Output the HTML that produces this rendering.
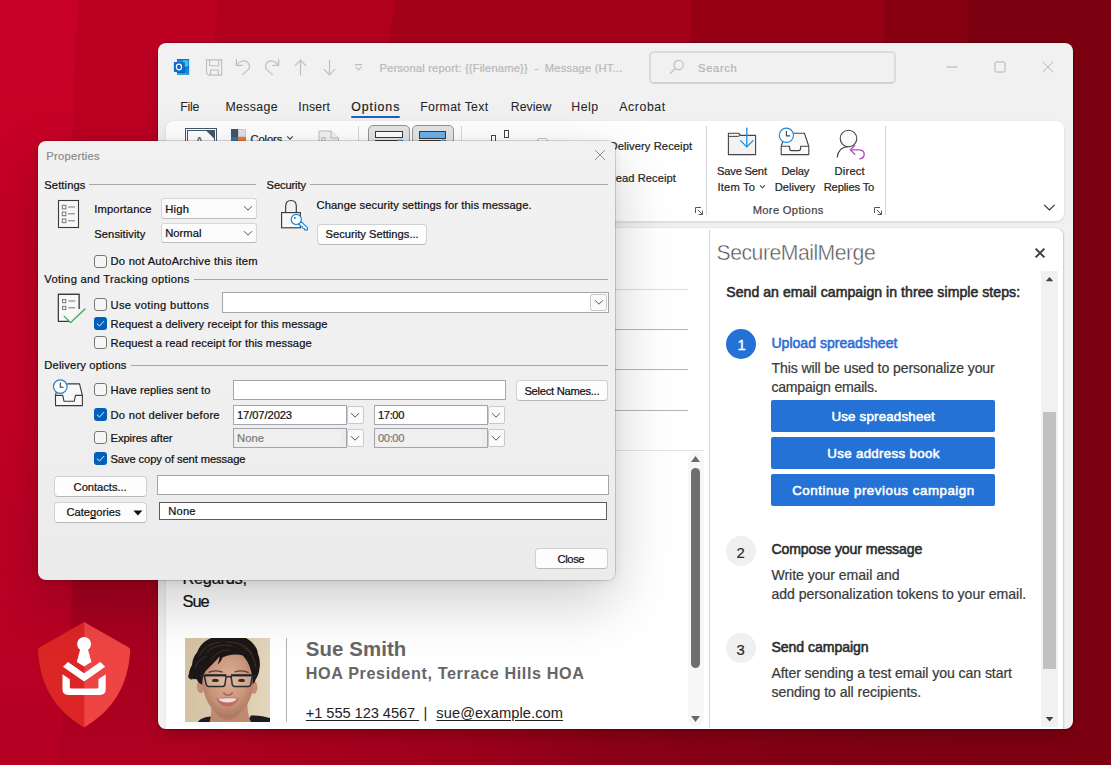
<!DOCTYPE html>
<html lang="en"><head><meta charset="utf-8"><title>Outlook – SecureMailMerge</title>
<style>
html,body{margin:0;padding:0}
body{width:1111px;height:765px;overflow:hidden;position:relative;background:#a8001e;font-family:"Liberation Sans",sans-serif}
body div,body svg,body span.t{position:absolute;box-sizing:border-box}
span.t{white-space:pre;line-height:1;transform-origin:0 50%}
svg{overflow:visible}
span.t{-webkit-text-stroke:0.22px currentColor}
div.g{left:0;top:0;width:0;height:0}

</style></head>
<body>
<div class="g desktop-wallpaper">
<svg style="left:0px;top:0px;" width="1111" height="765" viewBox="0 0 1111 765">
<defs>
<linearGradient id="bg" x1="0" y1="0" x2="1111" y2="0" gradientUnits="userSpaceOnUse">
<stop offset="0" stop-color="#c40026"/><stop offset="0.05" stop-color="#bc0024"/><stop offset="0.185" stop-color="#ae0020"/><stop offset="0.42" stop-color="#9c001b"/><stop offset="0.55" stop-color="#8a0016"/><stop offset="0.77" stop-color="#7e0013"/><stop offset="1" stop-color="#7a0011"/>
</linearGradient>
<linearGradient id="lf" x1="0" y1="0" x2="0" y2="765" gradientUnits="userSpaceOnUse"><stop offset="0" stop-color="#c80027"/><stop offset="0.55" stop-color="#c40026"/><stop offset="0.8" stop-color="#b90024"/><stop offset="1" stop-color="#b50023"/></linearGradient>
<linearGradient id="lf2" x1="0" y1="560" x2="0" y2="765" gradientUnits="userSpaceOnUse"><stop offset="0" stop-color="#a5001f"/><stop offset="0.5" stop-color="#a8001f"/><stop offset="1" stop-color="#b00021"/></linearGradient>
<linearGradient id="fade" x1="0" y1="0" x2="0" y2="1"><stop offset="0" stop-color="#fff" stop-opacity="1"/><stop offset="1" stop-color="#fff" stop-opacity="0"/></linearGradient>
</defs>
<rect width="1111" height="765" fill="url(#bg)"/>
<!-- low-poly facets (top band) -->
<polygon points="0,0 78,0 70,200 73,560 70,640 58,765 0,765" fill="url(#lf)"/>
<polygon points="78,0 218,0 206,150 157,160 157,141 70,200" fill="#bc0022"/>
<polygon points="218,0 396,0 386,60 206,150" fill="#b1001e"/>
<polygon points="396,0 691,0 691,60 386,60" fill="#a30019"/>
<polygon points="691,0 884,0 884,60 691,60" fill="#950015"/>
<polygon points="884,0 968,0 968,60 884,60" fill="#870012"/>
<polygon points="968,0 1111,0 1111,765 1060,765 1060,60 968,60" fill="#7b0010"/>
<polygon points="73,560 160,560 160,720 207,720 203,765 58,765 70,640" fill="url(#lf2)"/>
</svg>
</div>
<div class="g brand-logo">
<svg style="left:30px;top:615px;" width="110" height="120" viewBox="0 0 110 120">
<path d="M54.1 7 L98.4 32.2 Q100.3 33.2 100.2 35.6 C98.4 70 83.6 95 54.1 112.6 Z" fill="#ef4444"/>
<path d="M54.1 7 L9.8 32.2 Q7.9 33.2 8 35.6 C9.8 70 24.6 95 54.1 112.6 Z" fill="#dc2626"/>
<g fill="#fff">
<circle cx="54.1" cy="29" r="7"/>
<path d="M50.6 33 L57.6 33 L61.4 47 L54.1 51.5 L46.8 47 Z"/>
<path d="M33 51.8 L38 46.9 L54.1 58.3 L70.2 46.9 L75.2 51.8 L54.1 66.5 Z"/>
<path d="M32.5 59.2 L39.8 64.3 L39.8 72 Q39.8 73.5 41.3 73.5 L66.9 73.5 Q68.4 73.5 68.4 72 L68.4 64.3 L75.7 59.2 L75.7 74 Q75.7 79.9 69.8 79.9 L38.4 79.9 Q32.5 79.9 32.5 74 Z"/>
</g>
</svg>
</div>
<div class="g outlook-window">
<div style="left:157.5px;top:42.5px;width:915px;height:686px;background:#f1f1f1;border-radius:8px;box-shadow:0 0 0 1px rgba(60,0,10,.30),0 6px 16px -5px rgba(30,0,6,.40);"></div>
<div style="left:166px;top:121px;width:898px;height:99.5px;background:#fff;border-radius:8px;box-shadow:0 1px 3px rgba(0,0,0,.12);"></div>
<div style="left:166px;top:228px;width:898px;height:500.5px;background:#fff;border-radius:8px 8px 0 0;box-shadow:0 0 2px rgba(0,0,0,.12);border-right:1px solid #d2d2d2;"></div>
<div class="g title-bar">
<svg style="left:173px;top:58px;" width="18" height="18" viewBox="0 0 18 18">
<path d="M4 1 H15.4 Q16.1 1 16.1 1.7 V16.3 Q16.1 17 15.4 17 H4.7 Q4 17 4 16.3 Z" fill="#1490df"/>
<path d="M4 1 H15.4 Q16.1 1 16.1 1.7 V2.2 H4 Z" fill="#0a6cc8"/>
<path d="M10 2.2 H15.2 V8.8 H10 Z" fill="#3fc0f4"/>
<path d="M11.2 8.8 H16.1 V16.3 Q16.1 17 15.4 17 H11.2 Z" fill="#1b86dc"/>
<path d="M12.2 10.9 L16.1 8.4" stroke="#0d5aa8" stroke-width="0.7" fill="none"/>
<path d="M4 14.6 H12 L16.1 17 H4.7 Q4 17 4 16.3 Z" fill="#28a8ea"/>
<path d="M11 4.6 H11.8 V15 H3.8 V14 H11 Z" fill="#0b4f8f" opacity=".75"/>
<rect x="0.9" y="4" width="10.1" height="10" rx="0.8" fill="#0f6ad0"/>
<ellipse cx="5.95" cy="9" rx="2.6" ry="2.85" fill="none" stroke="#fff" stroke-width="1.2"/>
</svg>
<svg style="left:206px;top:58.5px;" width="17" height="17" viewBox="0 0 17 17"><g fill="none" stroke="#bebebe" stroke-width="1.1">
<path d="M0.5 0.9 H15.7 V16.1 H2.6 L0.5 14 Z"/>
<path d="M3.6 0.9 V6.8 H12.8 V0.9"/><path d="M4.6 16.1 V11 H12.3 V16.1"/></g></svg>
<svg style="left:235px;top:58px;" width="16" height="18" viewBox="0 0 16 18"><g fill="none" stroke="#bebebe" stroke-width="1.2" stroke-linecap="round" stroke-linejoin="round">
<path d="M1.4 1.6 V7.4 H7.2"/><path d="M1.6 7.2 C4 3.2 9 1.6 12.4 4.2 C15.6 6.8 14.8 10.4 12.4 12.4 L7.6 16.6"/></g></svg>
<svg style="left:264px;top:58px;" width="16" height="18" viewBox="0 0 16 18"><g fill="none" stroke="#bebebe" stroke-width="1.2" stroke-linecap="round" stroke-linejoin="round" transform="translate(16,0) scale(-1,1)">
<path d="M1.4 1.6 V7.4 H7.2"/><path d="M1.6 7.2 C4 3.2 9 1.6 12.4 4.2 C15.6 6.8 14.8 10.4 12.4 12.4 L7.6 16.6"/></g></svg>
<svg style="left:294px;top:58.5px;" width="13" height="17" viewBox="0 0 13 17"><g fill="none" stroke="#bebebe" stroke-width="1.2" stroke-linecap="round" stroke-linejoin="round"><path d="M6.5 16 V1.2"/><path d="M1.2 6.6 L6.5 1.2 L11.8 6.6"/></g></svg>
<svg style="left:323px;top:58.5px;" width="13" height="17" viewBox="0 0 13 17"><g fill="none" stroke="#bebebe" stroke-width="1.2" stroke-linecap="round" stroke-linejoin="round"><path d="M6.5 1 V15.8"/><path d="M1.2 10.4 L6.5 15.8 L11.8 10.4"/></g></svg>
<svg style="left:354px;top:62.5px;" width="9" height="9" viewBox="0 0 9 9"><g fill="none" stroke="#bebebe" stroke-width="1.1" stroke-linecap="round" stroke-linejoin="round"><path d="M1.2 1.6 H7.8"/><path d="M1.9 4.2 L4.5 6.8 L7.1 4.2"/></g></svg>
<span class="t" style="left:379.40px;top:63.00px;font-size:11.2px;color:#b9b9b9;letter-spacing:0.165px;">Personal report: {{Filename}}  -  Message (HT...</span>
<div style="left:649px;top:51px;width:246.5px;height:32.5px;background:#f1f1f1;border:2px solid #dcdcdc;border-bottom-color:#d2d2d2;border-radius:5px;"></div>
<svg style="left:669px;top:59px;" width="16" height="16" viewBox="0 0 16 16"><g fill="none" stroke="#bdbdbd" stroke-width="1.2" stroke-linecap="round"><circle cx="9.6" cy="6" r="4.6"/><path d="M6.3 9.4 L1.4 14.4"/></g></svg>
<span class="t" style="left:698.00px;top:63.00px;font-size:11.2px;color:#b5b5b5;letter-spacing:0.669px;">Search</span>
<svg style="left:946px;top:60px;" width="110" height="14" viewBox="0 0 110 14"><g fill="none" stroke="#b4b4b4" stroke-width="1">
<path d="M0.5 7 H11.5"/><rect x="49" y="2" width="10" height="10" rx="1.2"/><path d="M96.5 1.8 L107 12.2 M107 1.8 L96.5 12.2"/></g></svg>
</div>
<div class="g ribbon-tabs">
<span class="t" style="left:180.30px;top:101.00px;font-size:12.3px;color:#262626;letter-spacing:-0.276px;-webkit-text-stroke:0.06px currentColor;">File</span>
<span class="t" style="left:225.40px;top:101.00px;font-size:12.3px;color:#262626;letter-spacing:0.382px;-webkit-text-stroke:0.06px currentColor;">Message</span>
<span class="t" style="left:298.30px;top:101.00px;font-size:12.3px;color:#262626;letter-spacing:0.167px;-webkit-text-stroke:0.06px currentColor;">Insert</span>
<span class="t" style="left:351.30px;top:101.00px;font-size:12.3px;color:#1c1c1c;letter-spacing:0.935px;-webkit-text-stroke:0.2px currentColor;">Options</span>
<div style="left:351px;top:116px;width:48.5px;height:2px;background:#1763c2;border-radius:1px;"></div>
<span class="t" style="left:420.20px;top:101.00px;font-size:12.3px;color:#262626;letter-spacing:0.330px;-webkit-text-stroke:0.06px currentColor;">Format Text</span>
<span class="t" style="left:510.80px;top:101.00px;font-size:12.3px;color:#262626;letter-spacing:0.034px;-webkit-text-stroke:0.06px currentColor;">Review</span>
<span class="t" style="left:571.20px;top:101.00px;font-size:12.3px;color:#262626;letter-spacing:0.568px;-webkit-text-stroke:0.06px currentColor;">Help</span>
<span class="t" style="left:619.20px;top:101.00px;font-size:12.3px;color:#262626;letter-spacing:0.602px;-webkit-text-stroke:0.06px currentColor;">Acrobat</span>
</div>
<div class="g ribbon-commands">
<div style="left:185.3px;top:128px;width:31.5px;height:20px;border:1px solid #44546a;background:#fff;"></div>
<div style="left:187.3px;top:130px;width:27.5px;height:18px;border:1px solid #44546a;background:#fff;"></div>
<svg style="left:206px;top:130px;" width="9" height="9" viewBox="0 0 9 9"><path d="M0 0.5 H8.5 V9 Z" fill="#44546a"/></svg>
<span class="t" style="left:195.00px;top:135.00px;font-size:13px;color:#44546a;">A</span>
<div style="left:230.6px;top:129.4px;width:7.6px;height:8px;background:#44546a;"></div>
<div style="left:238.2px;top:129.4px;width:7.6px;height:8px;background:#e3e3e3;border:0.5px solid #cfcfcf;"></div>
<div style="left:230.6px;top:137.4px;width:7.6px;height:8px;background:#2e75b6;"></div>
<div style="left:238.2px;top:137.4px;width:7.6px;height:8px;background:#ed7d31;"></div>
<span class="t" style="left:250.50px;top:134.00px;font-size:11.2px;color:#262626;letter-spacing:-0.106px;">Colors</span>
<svg style="left:286.3px;top:135.2px;" width="8" height="6" viewBox="0 0 8 6"><path d="M1.2 1.4 L4 4.2 L6.8 1.4" fill="none" stroke="#444" stroke-width="1.1"/></svg>
<svg style="left:318px;top:129.5px;" width="22" height="16" viewBox="0 0 22 16"><g fill="#f3f3f3" stroke="#bdbdbd" stroke-width="1"><path d="M1 15 V1 H13 L20.5 8 V15"/><path d="M13 1 V8 H20.5"/><path d="M4 15 V7.5 H7 V15" fill="none"/></g></svg>
<div style="left:358px;top:126px;width:1px;height:90px;background:#d9d9d9;"></div>
<div style="left:368px;top:125.3px;width:41.5px;height:24px;background:#e6e6e6;border:1px solid #959595;border-radius:5px;"></div>
<div style="left:412px;top:125.3px;width:41.5px;height:24px;background:#e6e6e6;border:1px solid #959595;border-radius:5px;"></div>
<div style="left:375.2px;top:131.3px;width:27.6px;height:7px;background:#fff;border:1.2px solid #3b3b3b;"></div>
<div style="left:375.2px;top:139.6px;width:27.6px;height:7px;background:#fff;border:1.2px solid #3b3b3b;"></div>
<div style="left:419px;top:131.3px;width:27.3px;height:7.5px;background:#6cb2ee;border:1.2px solid #3b3b3b;"></div>
<div style="left:419px;top:140px;width:27.3px;height:7px;background:#fff;border:1.2px solid #3b3b3b;"></div>
<div style="left:461px;top:126px;width:1px;height:90px;background:#d9d9d9;"></div>
<svg style="left:394px;top:137px;" width="12" height="8" viewBox="0 0 12 8"><circle cx="6" cy="7" r="4" fill="#fff" stroke="#1e8bd8" stroke-width="1.1"/></svg>
<svg style="left:437px;top:137px;" width="12" height="8" viewBox="0 0 12 8"><circle cx="6" cy="7" r="4" fill="#fff" stroke="#1e8bd8" stroke-width="1.1"/></svg>
<div style="left:490.5px;top:134.5px;width:5.5px;height:9px;border:1px solid #444;"></div>
<div style="left:503.5px;top:130px;width:5.5px;height:8px;border:1px solid #444;"></div>
<div style="left:537px;top:138.3px;width:10.5px;height:8px;border:1px solid #c4c4c4;border-radius:2px;"></div>
<span class="t" style="left:609.50px;top:141.00px;font-size:11.2px;color:#262626;letter-spacing:0.076px;">Delivery Receipt</span>
<span class="t" style="left:607.60px;top:173.00px;font-size:11.2px;color:#262626;letter-spacing:0.037px;">Read Receipt</span>
<svg style="left:695px;top:207px;" width="8" height="8" viewBox="0 0 8 8"><g fill="none" stroke="#555" stroke-width="1"><path d="M0.5 6 V0.5 H6"/><path d="M2.8 2.8 L7.5 7.5 M7.5 3.6 V7.5 H3.6"/></g></svg>
<div style="left:706.2px;top:126.3px;width:1px;height:88.5px;background:#d4d4d4;"></div>
<svg style="left:726px;top:126px;" width="32" height="30" viewBox="0 0 32 30"><path d="M2.4 28.6 V7.2 H12.6 L14.6 9.4 H29.6 V28.6 Z" fill="#f2f2f2" stroke="#444" stroke-width="1.1" stroke-linejoin="round"/>
<path d="M2.4 10.4 H12 L14.2 9.4" fill="none" stroke="#444" stroke-width="1"/>
<g fill="none" stroke="#1e8bd8" stroke-width="1.3" stroke-linecap="round" stroke-linejoin="round"><path d="M20.8 2.2 V20.8"/><path d="M14.6 14.6 L20.8 20.9 L27 14.6"/></g></svg>
<span class="t" style="left:717.10px;top:166.00px;font-size:11.2px;color:#262626;letter-spacing:-0.216px;">Save Sent</span>
<span class="t" style="left:717.50px;top:182.00px;font-size:11.2px;color:#262626;letter-spacing:0.153px;">Item To</span>
<svg style="left:758.6px;top:184px;" width="7" height="6" viewBox="0 0 7 6"><path d="M1 1.4 L3.4 3.8 L5.8 1.4" fill="none" stroke="#444" stroke-width="1.1"/></svg>
<svg style="left:777px;top:126px;" width="34" height="30" viewBox="0 0 34 30"><path d="M12 7.2 H27.4 L31.8 20.2 V28.6 H4.2 V20.2 L6.5 13" fill="#fafafa" stroke="#444" stroke-width="1.1" stroke-linejoin="round"/>
<path d="M4.2 20.2 H12.6 V22.6 Q12.6 24.6 14.6 24.6 H21.6 Q23.6 24.6 23.6 22.6 V20.2 H31.8" fill="none" stroke="#444" stroke-width="1.1" stroke-linejoin="round"/>
<circle cx="9.4" cy="9.3" r="7.1" fill="#fff" stroke="#1e8bd8" stroke-width="1.2"/>
<path d="M9.4 5 V9.9 H13" fill="none" stroke="#444" stroke-width="1.1"/></svg>
<span class="t" style="left:781.40px;top:166.00px;font-size:11.2px;color:#262626;letter-spacing:-0.152px;">Delay</span>
<span class="t" style="left:774.70px;top:182.00px;font-size:11.2px;color:#262626;letter-spacing:0.011px;">Delivery</span>
<svg style="left:832px;top:126px;" width="36" height="34" viewBox="0 0 36 34"><circle cx="16.5" cy="12.5" r="8.3" fill="#fafafa" stroke="#444" stroke-width="1.1"/>
<path d="M5.2 31.3 C6 24.5 10 21 16 20.6" fill="none" stroke="#444" stroke-width="1.1" stroke-linecap="round"/>
<g fill="none" stroke="#b44ac4" stroke-width="1.3" stroke-linecap="round" stroke-linejoin="round"><path d="M18.6 23.8 H27.4 Q32.2 24.2 32.2 28.4 Q32 32.2 27.8 32.8"/><path d="M22.8 19.4 L18.4 23.8 L22.8 28.2"/></g></svg>
<span class="t" style="left:834.60px;top:166.00px;font-size:11.2px;color:#262626;letter-spacing:0.176px;">Direct</span>
<span class="t" style="left:823.70px;top:182.00px;font-size:11.2px;color:#262626;letter-spacing:-0.159px;">Replies To</span>
<span class="t" style="left:752.70px;top:205.00px;font-size:11.2px;color:#444;letter-spacing:0.313px;">More Options</span>
<svg style="left:874px;top:207px;" width="8" height="8" viewBox="0 0 8 8"><g fill="none" stroke="#555" stroke-width="1"><path d="M0.5 6 V0.5 H6"/><path d="M2.8 2.8 L7.5 7.5 M7.5 3.6 V7.5 H3.6"/></g></svg>
<div style="left:885px;top:126.3px;width:1px;height:88.5px;background:#d4d4d4;"></div>
<svg style="left:1043px;top:203px;" width="13" height="9" viewBox="0 0 13 9"><path d="M1.2 1.8 L6.4 7 L11.6 1.8" fill="none" stroke="#333" stroke-width="1.2"/></svg>
</div>
<div class="g message-body">
<div style="left:600px;top:289px;width:88px;height:1px;background:#dcdcdc;"></div>
<div style="left:600px;top:329px;width:88px;height:1px;background:#b4b4b4;"></div>
<div style="left:600px;top:369px;width:88px;height:1px;background:#b4b4b4;"></div>
<div style="left:600px;top:409.5px;width:88px;height:1px;background:#b4b4b4;"></div>
<div style="left:600px;top:449.5px;width:104px;height:1px;background:#e1e1e1;"></div>
<div style="left:687.5px;top:452px;width:16px;height:274px;background:#f7f7f7;border-radius:8px;"></div>
<div style="left:691px;top:467.5px;width:9.2px;height:200px;background:#6f6f6f;border-radius:4.6px;"></div>
<svg style="left:690px;top:455px;" width="11" height="8" viewBox="0 0 11 8"><path d="M5.5 1 L10 7 H1 Z" fill="#6a6a6a"/></svg>
<svg style="left:690px;top:715px;" width="11" height="8" viewBox="0 0 11 8"><path d="M5.5 7 L10 1 H1 Z" fill="#6a6a6a"/></svg>
<span class="t" style="left:182.40px;top:570.00px;font-size:16.4px;color:#111;letter-spacing:-0.274px;">Regards,</span>
<span class="t" style="left:182.40px;top:593.00px;font-size:16.4px;color:#111;letter-spacing:-0.936px;">Sue</span>
<div style="left:286px;top:637.5px;width:1px;height:84.5px;background:#b5b5b5;"></div>
<span class="t" style="left:305.80px;top:639.00px;font-size:20.4px;color:#666;font-weight:700;letter-spacing:0.100px;-webkit-text-stroke:0;">Sue Smith</span>
<span class="t" style="left:305.80px;top:665.00px;font-size:16.2px;color:#666;font-weight:700;letter-spacing:0.617px;-webkit-text-stroke:0;">HOA President, Terrace Hills HOA</span>
<span class="t" style="left:305.80px;top:706.00px;font-size:14.67px;color:#222;letter-spacing:-0.074px;-webkit-text-stroke:0;text-decoration:underline;text-decoration-thickness:1px;text-underline-offset:2px;">+1 555 123 4567&nbsp;</span>
<span class="t" style="left:423.60px;top:706.00px;font-size:14.67px;color:#222;-webkit-text-stroke:0;">|</span>
<span class="t" style="left:436.30px;top:706.00px;font-size:14.67px;color:#222;letter-spacing:0.073px;-webkit-text-stroke:0;text-decoration:underline;text-decoration-thickness:1px;text-underline-offset:2px;">sue@example.com</span>
<svg style="left:185px;top:638px;" width="85" height="84" viewBox="0 0 85 84">
<defs><clipPath id="pc"><rect width="85" height="84"/></clipPath>
<filter id="pb" x="-10%" y="-10%" width="120%" height="120%"><feGaussianBlur stdDeviation="0.7"/></filter>
<filter id="pb2" x="-10%" y="-10%" width="120%" height="120%"><feGaussianBlur stdDeviation="1.6"/></filter>
<radialGradient id="skin" cx="0.5" cy="0.42" r="0.62"><stop offset="0" stop-color="#dcae96"/><stop offset="0.6" stop-color="#c9967c"/><stop offset="1" stop-color="#a5725b"/></radialGradient>
<linearGradient id="wall" x1="0" x2="1"><stop offset="0" stop-color="#d4c2a2"/><stop offset="0.7" stop-color="#ddceb2"/><stop offset="1" stop-color="#e3d6bd"/></linearGradient></defs>
<g clip-path="url(#pc)">
<rect width="85" height="84" fill="url(#wall)"/>
<g filter="url(#pb)">
<path d="M13 84 C15 80.5 20 79 26 78.5 L28 84 Z" fill="#1d1d20"/>
<path d="M62 84 L66 77.5 C73 77 80 78.5 85 80 V84 Z" fill="#1d1d20"/>
<path d="M25.5 62 C27 72 26 80 24.5 84 H66 C63 78 62 70 62.5 60 Z" fill="#bf8a72"/>
<ellipse cx="15.6" cy="48.4" rx="3.6" ry="6.8" fill="#c48c74"/><ellipse cx="69" cy="49.4" rx="3.4" ry="6.6" fill="#c48c74"/>
<path d="M17 40 C16 20 30 12 44 12 C58 12 69 20 68.6 40 C68.6 52 66 62 60 69 C54 76 48 79.5 42.8 79.5 C37 79.5 31 76 26 69 C20 61 17.5 52 17 40 Z" fill="url(#skin)"/>
<path d="M30 74 C36 79 50 79 57 73 C52 80 46 82 42.5 82 C38 82 33 79 30 74 Z" fill="#a87560" opacity=".55"/>
</g>
<g filter="url(#pb)">
<path d="M4.5 38.5 C3 34 5.5 30 7 27 C7.5 21 9.5 17 12 14.5 C14 9 17 5.5 20 3.5 C24 0.5 28 -1 33 -1.5 H57 C62 0 65.5 2.5 67.5 5 C71 8.5 72.6 12 73 16 C75 21 75.4 27 74.4 31 C74 35.5 72.4 39 70.6 41.5 C70 44 69 45.5 67.6 46 C67.8 41 67.2 36.5 65.8 32.5 C64.5 27 61.6 21.5 57.8 17.6 C52 15.4 44 16.4 37.5 19.6 C36.6 22.5 35 25 32.6 26.4 C34 23 34.6 20.5 34.4 18.6 C31.6 22 28 26 24.6 29 C21.8 31.6 19.4 34 18.4 37.2 C17.4 40.5 17.4 43.5 17.2 46.5 C14.5 45.6 12.6 43.6 11.6 41 C9.4 41.6 6.4 41 4.5 38.5 Z" fill="#1e1917"/>
<path d="M7.4 40.6 C4.6 41 3.2 38.6 4.4 36.6" fill="none" stroke="#1e1917" stroke-width="1.6"/>
<g fill="none" stroke="#4a3c34" stroke-width="1.2" opacity=".55"><path d="M14 18 C18 10 26 5 36 4"/><path d="M22 14 C28 8 38 6 48 8"/><path d="M40 4 C52 3 62 8 67 16"/><path d="M10 30 C12 24 16 20 22 18"/><path d="M60 10 C66 14 70 22 71 30"/><path d="M26 22 C30 16 36 12 44 12"/></g>
</g>
<g fill="rgba(235,240,235,.22)" stroke="#2b2b2d" stroke-width="1.5"><path d="M20 37.4 H39.6 Q41.2 37.4 41 39 L40 46.2 Q39.7 48.4 37.6 48.4 H23.6 Q21.6 48.4 21.2 46.4 L19.6 39 Q19.4 37.4 20 37.4 Z"/><path d="M47.4 37.4 H66.4 Q67.4 37.4 67.2 39 L65.8 46.4 Q65.4 48.4 63.4 48.4 H49.6 Q47.6 48.4 47.2 46.2 L46.2 39 Q46 37.4 47.4 37.4 Z"/></g>
<path d="M19.4 37.2 H41.2 M46 37.2 H67.4" stroke="#242426" stroke-width="2.1" fill="none"/>
<path d="M41 39.4 C42.6 38.4 44.6 38.4 46.2 39.4" stroke="#2b2b2d" stroke-width="1.5" fill="none"/>
<path d="M19.6 38.4 L15 37.6 M67.2 38.4 L70.8 37.8" stroke="#2b2b2d" stroke-width="1.4" fill="none"/>
<g filter="url(#pb)">
<path d="M23.5 34.4 C27 32.6 33 32.6 37.6 34.2 M49.6 34 C54 32.6 60 32.8 63.6 34.6" stroke="#3b2a22" stroke-width="1.3" fill="none" opacity=".8"/>
<ellipse cx="30.4" cy="42.4" rx="3.4" ry="1.7" fill="#3d2b23"/><ellipse cx="56.6" cy="42.4" rx="3.4" ry="1.7" fill="#3d2b23"/>
<path d="M38.4 54.4 C39.6 56.6 41.4 57.2 42.8 57.2 C44.4 57.2 46.4 56.6 47.6 54.4" fill="none" stroke="#a06a55" stroke-width="1.5"/>
<path d="M31.3 60.4 C36 59.4 49 59.2 53.8 60 C51.6 65.6 47 68.4 42.4 68.4 C37.6 68.4 33.4 65.4 31.3 60.4 Z" fill="#c06a66"/>
<path d="M33 60.8 C37.6 60.2 48 60 52.2 60.6 C50 63.6 46.6 64.6 42.6 64.6 C38.6 64.6 35 63.6 33 60.8 Z" fill="#ebe0d8"/>
</g>
</g></svg>
</div>
<div class="g addin-pane">
<div style="left:709.3px;top:230px;width:1px;height:498px;background:#d6d6d6;"></div>
<span class="t" style="left:716.60px;top:242.00px;font-size:21.2px;color:#505050;letter-spacing:-0.496px;-webkit-text-stroke:0.45px #fff;">SecureMailMerge</span>
<svg style="left:1034px;top:246.5px;" width="12" height="12" viewBox="0 0 12 12"><path d="M1.6 1.6 L10.4 10.4 M10.4 1.6 L1.6 10.4" stroke="#3a3a3a" stroke-width="1.9" fill="none"/></svg>
<div style="left:1041.2px;top:271px;width:16.4px;height:456px;background:#f1f1f1;"></div>
<div style="left:1043px;top:411.5px;width:13px;height:257.5px;background:#c1c1c1;"></div>
<svg style="left:1045px;top:276px;" width="9" height="6" viewBox="0 0 9 6"><path d="M4.5 1 L8.2 5.2 H0.8 Z" fill="#404040"/></svg>
<svg style="left:1045px;top:716px;" width="9" height="6" viewBox="0 0 9 6"><path d="M4.6 5.4 L8.4 1 H0.8 Z" fill="#404040"/></svg>
<span class="t" style="left:726.20px;top:285.00px;font-size:14.1px;color:#2b2b2b;letter-spacing:0.038px;font-weight:400;-webkit-text-stroke:0.55px currentColor;">Send an email campaign in three simple steps:</span>
<div style="left:726.2px;top:329.2px;width:30px;height:30px;background:#2472d6;border-radius:50%;"></div>
<span class="t" style="left:737.40px;top:338.00px;font-size:14.8px;color:#fff;-webkit-text-stroke:0.4px currentColor;">1</span>
<span class="t" style="left:771.40px;top:336.00px;font-size:14.1px;color:#2b6cd4;letter-spacing:-0.009px;font-weight:400;-webkit-text-stroke:0.55px currentColor;">Upload spreadsheet</span>
<span class="t" style="left:771.40px;top:361.00px;font-size:14.1px;color:#3a3a3a;letter-spacing:-0.105px;">This will be used to personalize your</span>
<span class="t" style="left:771.40px;top:380.00px;font-size:14.1px;color:#3a3a3a;letter-spacing:-0.225px;">campaign emails.</span>
<div style="left:771px;top:400.2px;width:224px;height:31.4px;background:#2472d6;border-radius:2px;"></div>
<span class="t" style="left:831.40px;top:410.00px;font-size:13.3px;color:#fff;letter-spacing:0.205px;font-weight:400;-webkit-text-stroke:0.55px currentColor;">Use spreadsheet</span>
<div style="left:771px;top:437.2px;width:224px;height:31.4px;background:#2472d6;border-radius:2px;"></div>
<span class="t" style="left:827.30px;top:447.00px;font-size:13.3px;color:#fff;letter-spacing:0.321px;font-weight:400;-webkit-text-stroke:0.55px currentColor;">Use address book</span>
<div style="left:771px;top:474.2px;width:224px;height:31.4px;background:#2472d6;border-radius:2px;"></div>
<span class="t" style="left:792.20px;top:484.00px;font-size:13.3px;color:#fff;letter-spacing:0.539px;font-weight:400;-webkit-text-stroke:0.55px currentColor;">Continue previous campaign</span>
<div style="left:726.2px;top:536.4px;width:30px;height:30px;background:#f0f0f0;border-radius:50%;"></div>
<span class="t" style="left:736.60px;top:546.00px;font-size:14.8px;color:#2b2b2b;">2</span>
<span class="t" style="left:771.40px;top:542.00px;font-size:14.1px;color:#2b2b2b;letter-spacing:-0.093px;font-weight:400;-webkit-text-stroke:0.55px currentColor;">Compose your message</span>
<span class="t" style="left:771.40px;top:568.00px;font-size:14.1px;color:#3a3a3a;letter-spacing:-0.041px;">Write your email and</span>
<span class="t" style="left:771.40px;top:587.00px;font-size:14.1px;color:#3a3a3a;letter-spacing:-0.035px;">add personalization tokens to your email.</span>
<div style="left:726.2px;top:633px;width:30px;height:30px;background:#f0f0f0;border-radius:50%;"></div>
<span class="t" style="left:736.60px;top:643.00px;font-size:14.8px;color:#2b2b2b;">3</span>
<span class="t" style="left:771.40px;top:640.00px;font-size:14.1px;color:#2b2b2b;letter-spacing:-0.054px;font-weight:400;-webkit-text-stroke:0.55px currentColor;">Send campaign</span>
<span class="t" style="left:771.40px;top:666.00px;font-size:14.1px;color:#3a3a3a;letter-spacing:-0.078px;">After sending a test email you can start</span>
<span class="t" style="left:771.40px;top:685.00px;font-size:14.1px;color:#3a3a3a;letter-spacing:-0.057px;">sending to all recipients.</span>
</div>
</div>
<div class="g properties-dialog">
<div style="left:38px;top:141px;width:576.5px;height:438.5px;background:linear-gradient(#f1f1f1,#f0f0f0 50%,#ebebeb);border-radius:8px;box-shadow:0 0 0 1px rgba(0,0,0,.14),0 22px 60px rgba(0,0,0,.20),0 2px 10px rgba(0,0,0,.08);"></div>
<span class="t" style="left:46.20px;top:151.00px;font-size:11.2px;color:#8c8c8c;letter-spacing:0.278px;">Properties</span>
<svg style="left:594px;top:149px;" width="12" height="12" viewBox="0 0 12 12"><path d="M1 1 L11 11 M11 1 L1 11" stroke="#8f8f8f" stroke-width="1" fill="none"/></svg>
<div class="g group-settings">
<span class="t" style="left:44.30px;top:180.00px;font-size:11.2px;color:#111;letter-spacing:0.095px;">Settings</span>
<div style="left:89px;top:184px;width:167px;height:1px;background:#a6a6a6;"></div>
<span class="t" style="left:266.60px;top:180.00px;font-size:11.2px;color:#111;letter-spacing:-0.146px;">Security</span>
<div style="left:310px;top:184px;width:298px;height:1px;background:#a6a6a6;"></div>
<svg style="left:57px;top:199px;" width="23" height="30" viewBox="0 0 23 30"><rect x="1.5" y="1.5" width="20" height="27" fill="#f8f8f8" stroke="#3a3a3a" stroke-width="1.1"/>
<g fill="none" stroke="#777" stroke-width="1"><rect x="5.3" y="6.3" width="3.6" height="3.6"/><rect x="5.3" y="13.1" width="3.6" height="3.6"/><rect x="5.3" y="20" width="3.6" height="3.6"/>
<path d="M11 8 H18 M11 14.8 H18 M11 21.8 H18"/></g></svg>
<span class="t" style="left:94.30px;top:204.00px;font-size:11.2px;color:#111;letter-spacing:0.137px;">Importance</span>
<span class="t" style="left:94.30px;top:229.00px;font-size:11.2px;color:#111;letter-spacing:0.062px;">Sensitivity</span>
<div style="left:161px;top:198px;width:95.5px;height:20.5px;background:#fbfbfb;border:1px solid #d6d6d6;border-bottom-color:#bcbcbc;border-radius:3px;"></div>
<span class="t" style="left:165.20px;top:204.00px;font-size:11.2px;color:#111;letter-spacing:0.295px;">High</span>
<svg style="left:243.0px;top:205.45px;" width="10" height="7" viewBox="0 0 10 7"><path d="M1 1.2 L5 5.2 L9 1.2" fill="none" stroke="#555" stroke-width="1"/></svg>
<div style="left:161px;top:222.5px;width:95.5px;height:20px;background:#fbfbfb;border:1px solid #d6d6d6;border-bottom-color:#bcbcbc;border-radius:3px;"></div>
<span class="t" style="left:165.20px;top:228.00px;font-size:11.2px;color:#111;letter-spacing:0.047px;">Normal</span>
<svg style="left:243.0px;top:229.7px;" width="10" height="7" viewBox="0 0 10 7"><path d="M1 1.2 L5 5.2 L9 1.2" fill="none" stroke="#555" stroke-width="1"/></svg>
<div style="left:94px;top:254.5px;width:13px;height:13px;background:#f6f6f6;border:1px solid #767676;border-radius:3px;"></div>
<span class="t" style="left:110.50px;top:256.00px;font-size:11.2px;color:#111;letter-spacing:0.243px;">Do not AutoArchive this item</span>
<svg style="left:279px;top:198px;" width="30" height="33" viewBox="0 0 30 33"><path d="M6.7 14.4 V8.2 Q6.7 2.5 12 2.5 Q17.3 2.5 17.3 8.2 V14.4" fill="none" stroke="#333" stroke-width="1.1"/>
<rect x="2.6" y="14.6" width="18.8" height="15.2" fill="#f8f8f8" stroke="#333" stroke-width="1.1"/>
<g stroke="#1e82d2" stroke-width="1.15" fill="#fff" stroke-linejoin="round"><path d="M21.6 23.2 L28.4 29.6 V31.9 H25.8 L25.2 30.5 L23.9 30.3 L23.4 28.8 L22 28.6 L21.5 27.2 L19.4 26.4 Z"/><circle cx="17.3" cy="21.4" r="5.1"/></g><circle cx="15.9" cy="20" r="1" fill="#1e82d2"/></svg>
<span class="t" style="left:316.50px;top:200.00px;font-size:11.2px;color:#111;letter-spacing:0.105px;">Change security settings for this message.</span>
<div style="left:317px;top:223.5px;width:110px;height:21px;background:#fdfdfd;border:1px solid #d0d0d0;border-bottom-color:#b8b8b8;border-radius:4px;"></div>
<span class="t" style="left:325.50px;top:229.00px;font-size:11.2px;color:#111;letter-spacing:-0.004px;">Security Settings...</span>
</div>
<div class="g group-voting-tracking">
<span class="t" style="left:44.30px;top:274.00px;font-size:11.2px;color:#111;letter-spacing:0.290px;">Voting and Tracking options</span>
<div style="left:193.5px;top:278.6px;width:414.5px;height:1px;background:#a6a6a6;"></div>
<svg style="left:57px;top:293px;" width="30" height="31" viewBox="0 0 30 31"><path d="M22 16 V1.4 H1.4 V28.4 H13" fill="#f8f8f8" stroke="#3a3a3a" stroke-width="1.1"/>
<path d="M1.4 1.4 H22 V17 L13.5 25 L13 28.4 H1.4 Z" fill="#f8f8f8" stroke="none"/>
<path d="M22 16 V1.4 H1.4 V28.4 H12" fill="none" stroke="#3a3a3a" stroke-width="1.1"/>
<g fill="none" stroke="#777" stroke-width="1"><rect x="5.6" y="6.5" width="3.2" height="3.2"/><rect x="5.6" y="13.3" width="3.2" height="3.2"/><path d="M11.4 8 H18.2 M11.4 14.8 H18.2"/></g>
<path d="M7.2 23.4 L13.6 29.6 L28 16" fill="none" stroke="#3aa757" stroke-width="1.3" stroke-linecap="round" stroke-linejoin="round"/></svg>
<div style="left:94px;top:298.3px;width:13px;height:13px;background:#f6f6f6;border:1px solid #767676;border-radius:3px;"></div>
<span class="t" style="left:110.50px;top:300.00px;font-size:11.2px;color:#111;letter-spacing:0.331px;">Use voting buttons</span>
<div style="left:222px;top:292px;width:386.5px;height:21px;background:#fff;border:1px solid #a4a4ae;"></div>
<div style="left:590px;top:294px;width:17px;height:17px;background:#fafafa;border:1px solid #c9c9c9;border-radius:2px;"></div>
<svg style="left:593.5px;top:299.3px;" width="10" height="7" viewBox="0 0 10 7"><path d="M1 1.2 L5 5.2 L9 1.2" fill="none" stroke="#555" stroke-width="1"/></svg>
<div style="left:94px;top:317.2px;width:13px;height:13px;background:#005fb8;border-radius:3px;"></div>
<svg style="left:94px;top:317.2px;" width="13" height="13" viewBox="0 0 13 13"><path d="M3.2 6.9 L5.5 9 L9.9 4.3" fill="none" stroke="#fff" stroke-width="0.9" stroke-linecap="round" stroke-linejoin="round"/></svg>
<span class="t" style="left:110.50px;top:319.00px;font-size:11.2px;color:#111;letter-spacing:0.061px;">Request a delivery receipt for this message</span>
<div style="left:94px;top:336px;width:13px;height:13px;background:#f6f6f6;border:1px solid #767676;border-radius:3px;"></div>
<span class="t" style="left:110.50px;top:338.00px;font-size:11.2px;color:#111;letter-spacing:0.074px;">Request a read receipt for this message</span>
</div>
<div class="g group-delivery-options">
<span class="t" style="left:44.30px;top:360.00px;font-size:11.2px;color:#111;letter-spacing:0.167px;">Delivery options</span>
<div style="left:130.5px;top:365px;width:477.5px;height:1px;background:#a6a6a6;"></div>
<svg style="left:52px;top:378px;" width="33" height="29" viewBox="0 0 33 29"><path d="M15.4 5.9 H27.5 L30.4 17.4 V27.6 H3.5 V17.4 L5 11.5" fill="#f8f8f8" stroke="#3a3a3a" stroke-width="1.1" stroke-linejoin="round"/>
<path d="M3.5 17.4 H10.8 L12 23.3 H22.2 L23.5 17.4 H30.4" fill="none" stroke="#3a3a3a" stroke-width="1.1" stroke-linejoin="round"/>
<circle cx="8.3" cy="8.6" r="6.8" fill="#fff" stroke="#1e82d2" stroke-width="1.2"/>
<path d="M8.3 4.6 V9.2 H11.6" fill="none" stroke="#3a3a3a" stroke-width="1.1"/></svg>
<div style="left:94px;top:383px;width:13px;height:13px;background:#f6f6f6;border:1px solid #767676;border-radius:3px;"></div>
<span class="t" style="left:110.50px;top:385.00px;font-size:11.2px;color:#111;letter-spacing:0.054px;">Have replies sent to</span>
<div style="left:233px;top:380px;width:273px;height:20px;background:#fff;border:1px solid #a4a4ae;"></div>
<div style="left:516px;top:380px;width:92px;height:21px;background:#fdfdfd;border:1px solid #d0d0d0;border-bottom-color:#b8b8b8;border-radius:4px;"></div>
<span class="t" style="left:524.40px;top:386.00px;font-size:11.2px;color:#111;letter-spacing:-0.276px;">Select Names...</span>
<div style="left:94px;top:408.3px;width:13px;height:13px;background:#005fb8;border-radius:3px;"></div>
<svg style="left:94px;top:408.3px;" width="13" height="13" viewBox="0 0 13 13"><path d="M3.2 6.9 L5.5 9 L9.9 4.3" fill="none" stroke="#fff" stroke-width="0.9" stroke-linecap="round" stroke-linejoin="round"/></svg>
<span class="t" style="left:110.50px;top:410.00px;font-size:11.2px;color:#111;letter-spacing:0.262px;">Do not deliver before</span>
<div style="left:233px;top:405px;width:113.5px;height:20px;background:#fff;border:1px solid #a4a4ae;"></div>
<span class="t" style="left:237.00px;top:410.00px;font-size:11.2px;color:#111;letter-spacing:-0.100px;">17/07/2023</span>
<div style="left:346.5px;top:406px;width:17.2px;height:18px;background:#fafafa;border:1px solid #c9c9c9;border-radius:2px;"></div>
<svg style="left:350.1px;top:411.8px;" width="10" height="7" viewBox="0 0 10 7"><path d="M1 1.2 L5 5.2 L9 1.2" fill="none" stroke="#555" stroke-width="1"/></svg>
<div style="left:374px;top:405px;width:113.5px;height:20px;background:#fff;border:1px solid #a4a4ae;"></div>
<span class="t" style="left:378.00px;top:410.00px;font-size:11.2px;color:#111;letter-spacing:-0.400px;">17:00</span>
<div style="left:487.5px;top:406px;width:17.2px;height:18px;background:#fafafa;border:1px solid #c9c9c9;border-radius:2px;"></div>
<svg style="left:491.1px;top:411.8px;" width="10" height="7" viewBox="0 0 10 7"><path d="M1 1.2 L5 5.2 L9 1.2" fill="none" stroke="#555" stroke-width="1"/></svg>
<div style="left:94px;top:431.3px;width:13px;height:13px;background:#f6f6f6;border:1px solid #767676;border-radius:3px;"></div>
<span class="t" style="left:110.50px;top:433.00px;font-size:11.2px;color:#111;letter-spacing:-0.059px;">Expires after</span>
<div style="left:233px;top:428px;width:113.5px;height:20px;background:#ececec;border:1px solid #a4a4ae;"></div>
<div style="left:235px;top:430px;width:105.5px;height:16px;background:#f0f0f0;"></div>
<span class="t" style="left:237.00px;top:433.00px;font-size:11.2px;color:#7a7a7a;letter-spacing:0.083px;">None</span>
<div style="left:346.5px;top:429px;width:17.2px;height:18px;background:#fafafa;border:1px solid #c9c9c9;border-radius:2px;"></div>
<svg style="left:350.1px;top:434.8px;" width="10" height="7" viewBox="0 0 10 7"><path d="M1 1.2 L5 5.2 L9 1.2" fill="none" stroke="#555" stroke-width="1"/></svg>
<div style="left:374px;top:428px;width:113.5px;height:20px;background:#ececec;border:1px solid #a4a4ae;"></div>
<div style="left:376px;top:430px;width:105.5px;height:16px;background:#f0f0f0;"></div>
<span class="t" style="left:378.00px;top:433.00px;font-size:11.2px;color:#7a7a7a;letter-spacing:-0.400px;">00:00</span>
<div style="left:487.5px;top:429px;width:17.2px;height:18px;background:#fafafa;border:1px solid #c9c9c9;border-radius:2px;"></div>
<svg style="left:491.1px;top:434.8px;" width="10" height="7" viewBox="0 0 10 7"><path d="M1 1.2 L5 5.2 L9 1.2" fill="none" stroke="#555" stroke-width="1"/></svg>
<div style="left:94px;top:452.3px;width:13px;height:13px;background:#005fb8;border-radius:3px;"></div>
<svg style="left:94px;top:452.3px;" width="13" height="13" viewBox="0 0 13 13"><path d="M3.2 6.9 L5.5 9 L9.9 4.3" fill="none" stroke="#fff" stroke-width="0.9" stroke-linecap="round" stroke-linejoin="round"/></svg>
<span class="t" style="left:110.50px;top:454.00px;font-size:11.2px;color:#111;letter-spacing:-0.102px;">Save copy of sent message</span>
<div style="left:54px;top:476px;width:93px;height:21px;background:#fdfdfd;border:1px solid #d0d0d0;border-bottom-color:#b8b8b8;border-radius:4px;"></div>
<span class="t" style="left:73.60px;top:482.00px;font-size:11.2px;color:#111;letter-spacing:-0.038px;">Contacts...</span>
<div style="left:157px;top:475px;width:452px;height:20px;background:#fff;border:1px solid #a4a4ae;"></div>
<div style="left:54px;top:502px;width:93px;height:21px;background:#fdfdfd;border:1px solid #d0d0d0;border-bottom-color:#b8b8b8;border-radius:4px;"></div>
<span class="t" style="left:66.50px;top:507.00px;font-size:11.2px;color:#111;letter-spacing:-0.014px;">Cate<u style="text-decoration-skip-ink:none;text-underline-offset:1.5px;text-decoration-thickness:1px">g</u>ories</span>
<svg style="left:132.5px;top:510px;" width="10" height="6" viewBox="0 0 10 6"><path d="M0.4 0.4 H9.4 L4.9 5.4 Z" fill="#111"/></svg>
<div style="left:159px;top:502px;width:447.5px;height:18px;background:#fff;border:1px solid #5c5c5c;"></div>
<span class="t" style="left:168.30px;top:506.00px;font-size:11.2px;color:#111;letter-spacing:0.150px;">None</span>
<div style="left:535px;top:548px;width:73px;height:21px;background:#fdfdfd;border:1px solid #d0d0d0;border-bottom-color:#b8b8b8;border-radius:4px;"></div>
<span class="t" style="left:557.60px;top:554.00px;font-size:11.2px;color:#111;letter-spacing:-0.402px;">Close</span>
</div>
</div>
</body></html>
